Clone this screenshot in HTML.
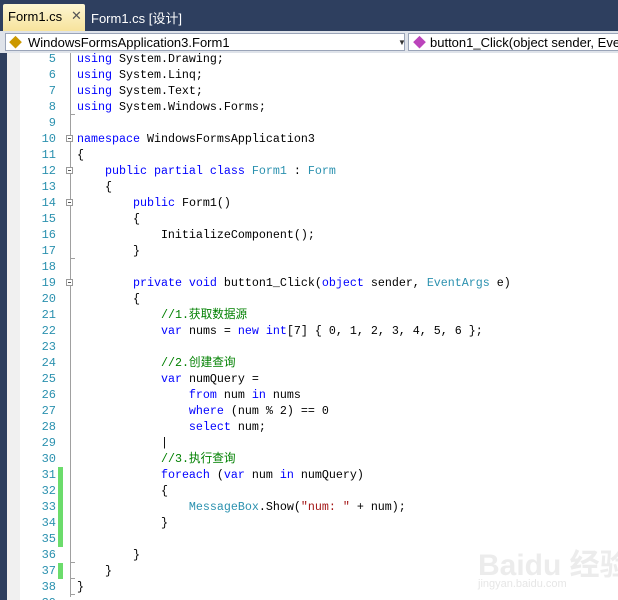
<!DOCTYPE html>
<html><head><meta charset="utf-8"><style>
html{overflow:hidden}
body{margin:0;width:618px;height:600px;overflow:hidden;background:#fff;position:relative;font-family:"Liberation Sans","Noto Sans CJK SC",sans-serif}
#tabs{position:absolute;left:0;top:0;width:618px;height:31px;background:#2e3f5f}
#t1{position:absolute;left:3px;top:4px;width:82px;height:27px;background:linear-gradient(#fdf6d2,#f7e39c);border-radius:2px 2px 0 0;font-size:13px;color:#000}
#t2{position:absolute;left:91px;top:8px;font-size:13px;color:#fff}
#bar{position:absolute;left:0;top:31px;width:618px;height:22px;background:#dfe3ea;overflow:hidden}
.dd{position:absolute;top:2px;height:18px;background:#fff;border:1px solid #9aa4b8;font-size:13px;line-height:18px;box-sizing:border-box;overflow:hidden}
#dark{position:absolute;left:0;top:53px;width:7px;height:547px;background:#2e3f5f}
#gut{position:absolute;left:7px;top:53px;width:13px;height:547px;background:#f0f0f0}
#code{position:absolute;left:0;top:0;width:618px;height:600px;overflow:hidden}
.l{position:absolute;left:0;height:16px;line-height:16px;font-family:"Liberation Mono","Noto Sans CJK SC",monospace;font-size:11.67px;white-space:pre;color:#000}
.n{position:absolute;width:56px;text-align:right;color:#2b91af;font-family:"Liberation Mono",monospace;font-size:12px;height:16px;line-height:16px}
.k{color:#00f}.t{color:#2b91af}.c{color:#008000}.s{color:#a31515}
.g{position:absolute;left:58px;width:5px;height:16px;background:#6cdc6c}
.fb{position:absolute;left:66px;width:7px;height:7px;border:1px solid #999;background:#fff;box-sizing:border-box}
.fb:after{content:"";position:absolute;left:1px;top:2px;width:3px;height:1px;background:#555}
</style></head><body>
<div id="tabs">
<div id="t1"><span style="position:absolute;left:5px;top:5px">Form1.cs</span><span style="position:absolute;left:68px;top:4px;color:#555">✕</span></div>
<div id="t2">Form1.cs [设计]</div>
</div>
<div id="bar">
<div class="dd" style="left:5px;width:400px"><span style="color:#c90;position:absolute;left:3px">◆</span><span style="position:absolute;left:22px">WindowsFormsApplication3.Form1</span><span style="position:absolute;left:392px;font-size:8px;color:#333">▼</span></div>
<div class="dd" style="left:408px;width:212px"><span style="color:#b4b;position:absolute;left:4px">◆</span><span style="position:absolute;left:21px;white-space:nowrap">button1_Click(object sender, Eve</span></div>
</div>
<div id="dark"></div><div id="gut"></div>
<div style="position:absolute;left:70px;top:53px;width:1px;height:544px;background:#a0a0a0"></div>
<div id="code"></div>
<div style="position:absolute;left:478px;top:540px;font-size:30px;font-weight:bold;color:#ececec;white-space:nowrap">Baidu 经验</div>
<div style="position:absolute;left:478px;top:578px;font-size:11px;color:#e6e6e6;white-space:nowrap">jingyan.baidu.com</div>
<script>
var L={5:'<span class="k">using</span> System.Drawing;',6:'<span class="k">using</span> System.Linq;',7:'<span class="k">using</span> System.Text;',8:'<span class="k">using</span> System.Windows.Forms;',9:'',
10:'<span class="k">namespace</span> WindowsFormsApplication3',11:'{',12:'    <span class="k">public partial class</span> <span class="t">Form1</span> : <span class="t">Form</span>',13:'    {',14:'        <span class="k">public</span> Form1()',15:'        {',16:'            InitializeComponent();',17:'        }',18:'',
19:'        <span class="k">private void</span> button1_Click(<span class="k">object</span> sender, <span class="t">EventArgs</span> e)',20:'        {',21:'            <span class="c">//1.获取数据源</span>',22:'            <span class="k">var</span> nums = <span class="k">new int</span>[7] { 0, 1, 2, 3, 4, 5, 6 };',23:'',24:'            <span class="c">//2.创建查询</span>',25:'            <span class="k">var</span> numQuery =',26:'                <span class="k">from</span> num <span class="k">in</span> nums',27:'                <span class="k">where</span> (num % 2) == 0',28:'                <span class="k">select</span> num;',29:'            |',30:'            <span class="c">//3.执行查询</span>',31:'            <span class="k">foreach</span> (<span class="k">var</span> num <span class="k">in</span> numQuery)',32:'            {',33:'                <span class="t">MessageBox</span>.Show(<span class="s">"num: "</span> + num);',34:'            }',35:'',36:'        }',37:'    }',38:'}',39:''};
var h='';
for(var n=5;n<=39;n++){var y=51+(n-5)*16;
h+='<div class="n" style="top:'+y+'px">'+n+'</div>';
h+='<div class="l" style="left:77px;top:'+y+'px">'+L[n]+'</div>';
if([31,32,33,34,35,37].indexOf(n)>=0)h+='<div class="g" style="top:'+y+'px"></div>';
if([10,12,14,19].indexOf(n)>=0)h+='<div class="fb" style="top:'+(y+4)+'px"></div>';
if([8,17,36,37,38].indexOf(n)>=0)h+='<div style="position:absolute;left:70px;top:'+(y+15)+'px;width:5px;height:1px;background:#a0a0a0"></div>';
}
document.getElementById('code').innerHTML=h;
</script>
</body></html>
